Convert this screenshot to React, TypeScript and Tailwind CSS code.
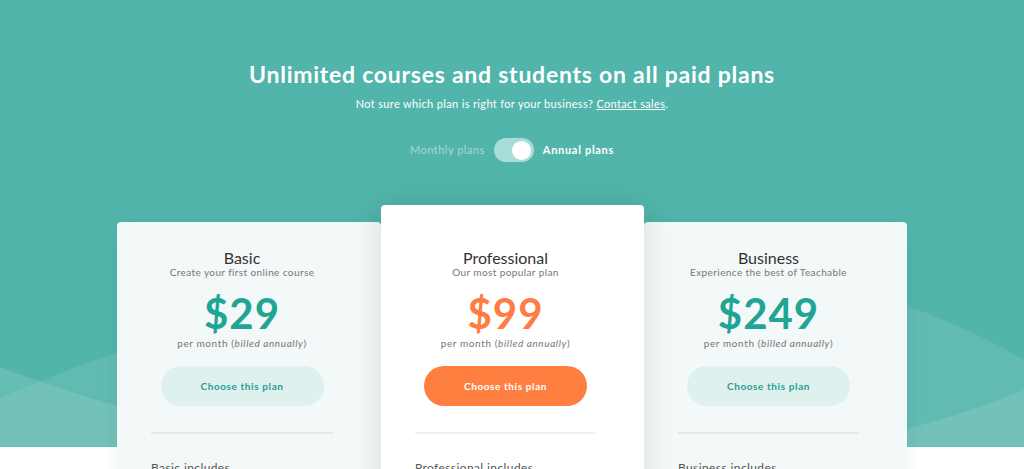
import React from "react";

type Plan = {
  name: string;
  tagline: string;
  price: string;
  featured?: boolean;
  includes: string[];
};

const PLANS: Plan[] = [
  {
    name: "Basic",
    tagline: "Create your first online course",
    price: "$29",
    includes: ["Unlimited video", "Unlimited courses", "Unlimited students"],
  },
  {
    name: "Professional",
    tagline: "Our most popular plan",
    price: "$99",
    featured: true,
    includes: ["Everything in Basic", "No transaction fees", "Graded quizzes"],
  },
  {
    name: "Business",
    tagline: "Experience the best of Teachable",
    price: "$249",
    includes: ["Everything in Professional", "Bulk student enrollments", "Advanced theme customization"],
  },
];

function PlanCard({ plan }: { plan: Plan }) {
  const featured = plan.featured;
  return (
    <div
      className={`flex flex-col items-center rounded-t-[4px] pl-[34px] pr-[48px] pb-10 ${
        featured
          ? "relative z-10 w-[263px] bg-white pt-[44px] shadow-[0_0_30px_rgba(0,0,0,0.12)]"
          : "mt-[17px] bg-[#f3f8f8] pt-[27px] shadow-[0_0_20px_rgba(0,0,0,0.06)] " +
            (plan.name === "Basic" ? "w-[264px]" : "w-[263px]")
      }`}
    >
      <h3 className="text-[16px] leading-[17px] text-[#333]">{plan.name}</h3>
      <p className="text-[10px] leading-[12px] tracking-[0.4px] text-[#777]">{plan.tagline}</p>
      <div
        className={`mt-[14px] text-[42px] font-bold leading-[42px] tracking-[1px] ${
          featured ? "text-[#ff7c43]" : "text-[#1fa594]"
        }`}
      >
        {plan.price}
      </div>
      <p className="mt-[3px] text-[10px] leading-[12px] tracking-[0.6px] text-[#777]">
        per month (<i>billed annually</i>)
      </p>
      <button
        className={`mt-[17px] h-[40px] w-[163px] rounded-full text-[10px] font-bold tracking-[0.6px] ${
          featured ? "bg-[#ff7f41] text-white" : "bg-[#dff1ef] text-[#26a08f]"
        }`}
      >
        Choose this plan
      </button>
      <div
        className={`mt-[26px] h-[2px] w-full ${
          featured ? "bg-[#f0f0f0]" : "bg-[#e2e8e8]"
        }`}
      />
      <div className="mt-[27px] w-full">
        <p className="text-[12px] leading-[14px] tracking-[0.4px] text-[#555]">{plan.name} includes</p>
        <ul className="mt-3 space-y-2 text-[11px] text-[#666]">
          {plan.includes.map((item) => (
            <li key={item}>{item}</li>
          ))}
        </ul>
      </div>
    </div>
  );
}

export default function App() {
  return (
    <div className="min-h-screen overflow-hidden bg-white font-['Lato',sans-serif]">
      {/* Hero */}
      <section className="relative h-[447px] overflow-hidden bg-[#52b5ab]">
        <svg
          className="absolute inset-0 h-full w-full"
          viewBox="0 0 1024 447"
          preserveAspectRatio="none"
        >
          <path
            d="M0 398 C250 290 700 170 1024 360 L1024 447 L0 447 Z"
            fill="#ffffff"
            fillOpacity="0.09"
          />
          <path
            d="M0 367 C300 480 700 520 1024 390 L1024 447 L0 447 Z"
            fill="#ffffff"
            fillOpacity="0.11"
          />
        </svg>
        <div className="relative flex flex-col items-center pt-[61px] text-white">
          <h1 className="text-[23px] font-bold leading-[27px] tracking-[0.75px]">
            Unlimited courses and students on all paid plans
          </h1>
          <p className="mt-[9px] text-[11px] leading-[13px] tracking-[0.35px]">
            Not sure which plan is right for your business?{" "}
            <a href="#" className="underline">
              Contact sales
            </a>
            .
          </p>
          <div className="mt-[28px] flex items-center gap-[9px] text-[11px] tracking-[0.5px]">
            <span className="text-[#a6d9d3]">Monthly plans</span>
            <span className="flex h-[24px] w-[40px] items-center justify-end rounded-full bg-[#a8dcd6] pr-[3px]">
              <span className="h-[19px] w-[19px] rounded-full bg-white" />
            </span>
            <span className="font-bold tracking-[0.7px]">Annual plans</span>
          </div>
        </div>
      </section>

      {/* Plans */}
      <div className="relative z-10 -mt-[242px] flex items-start justify-center">
        {PLANS.map((plan) => (
          <PlanCard key={plan.name} plan={plan} />
        ))}
      </div>
    </div>
  );
}
